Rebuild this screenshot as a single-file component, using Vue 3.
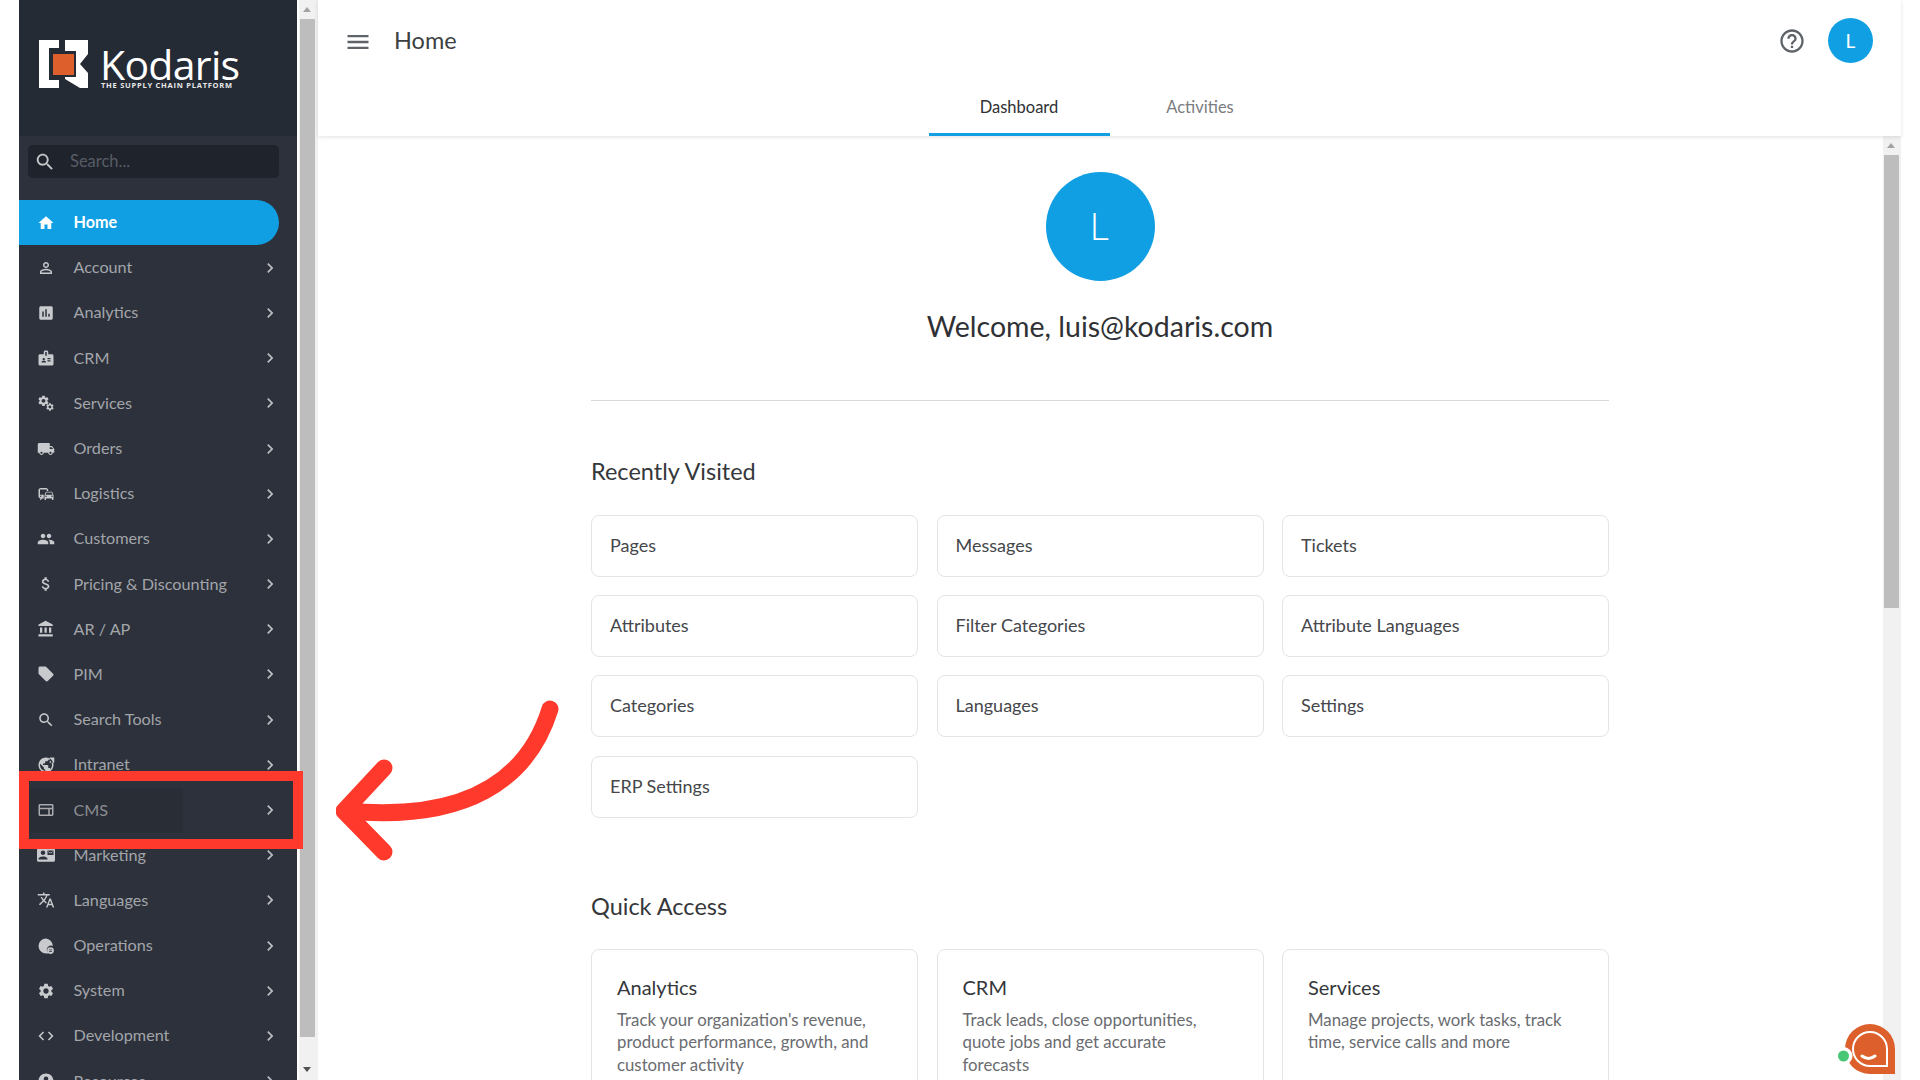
<script setup>
const gear = 'M19.14 12.94c.04-.3.06-.61.06-.94 0-.32-.02-.64-.07-.94l2.03-1.58c.18-.14.23-.41.12-.61l-1.92-3.32c-.12-.22-.37-.29-.59-.22l-2.39.96c-.5-.38-1.03-.7-1.62-.94l-.36-2.54c-.04-.24-.24-.41-.48-.41h-3.84c-.24 0-.43.17-.47.41l-.36 2.54c-.59.24-1.13.57-1.62.94l-2.39-.96c-.22-.08-.47 0-.59.22L2.74 8.87c-.12.21-.08.47.12.61l2.03 1.58c-.05.3-.09.63-.09.94s.02.64.07.94l-2.03 1.58c-.18.14-.23.41-.12.61l1.92 3.32c.12.22.37.29.59.22l2.39-.96c.5.38 1.03.7 1.62.94l.36 2.54c.05.24.24.41.48.41h3.84c.24 0 .44-.17.47-.41l.36-2.54c.59-.24 1.13-.56 1.62-.94l2.39.96c.22.08.47 0 .59-.22l1.92-3.32c.12-.22.07-.47-.12-.61l-2.01-1.58zM12 15.6c-1.98 0-3.6-1.62-3.6-3.6s1.62-3.6 3.6-3.6 3.6 1.62 3.6 3.6-1.62 3.6-3.6 3.6z'
const searchPath = 'M15.5 14h-.79l-.28-.27C15.41 12.59 16 11.11 16 9.5 16 5.91 13.09 3 9.5 3S3 5.91 3 9.5 5.91 16 9.5 16c1.61 0 3.09-.59 4.23-1.57l.27.28v.79l5 4.99L20.49 19l-4.99-5zm-6 0C7.01 14 5 11.99 5 9.5S7.01 5 9.5 5 14 7.01 14 9.5 11.99 14 9.5 14z'

const menu = [
  { label: 'Home', active: true, d: 'M10 20v-6h4v6h5v-8h3L12 3 2 12h3v8z' },
  { label: 'Account', d: 'M12 5.9a2.1 2.1 0 1 1 0 4.2 2.1 2.1 0 0 1 0-4.2m0 9c2.97 0 6.1 1.46 6.1 2.1v1.1H5.9V17c0-.64 3.13-2.1 6.1-2.1M12 4C9.79 4 8 5.79 8 8s1.79 4 4 4 4-1.79 4-4-1.79-4-4-4zm0 9c-2.67 0-8 1.34-8 4v3h16v-3c0-2.66-5.33-4-8-4z' },
  { label: 'Analytics', d: 'M19 3H5c-1.1 0-2 .9-2 2v14c0 1.1.9 2 2 2h14c1.1 0 2-.9 2-2V5c0-1.1-.9-2-2-2zM9 17H7v-7h2v7zm4 0h-2V7h2v10zm4 0h-2v-4h2v4z' },
  { label: 'CRM', d: 'M20 7h-5V4c0-1.1-.9-2-2-2h-2c-1.1 0-2 .9-2 2v3H4c-1.1 0-2 .9-2 2v11c0 1.1.9 2 2 2h16c1.1 0 2-.9 2-2V9c0-1.1-.9-2-2-2zM9 12c.83 0 1.5.67 1.5 1.5S9.83 15 9 15s-1.5-.67-1.5-1.5S8.17 12 9 12zm3 6H6v-.75c0-1 2-1.5 3-1.5s3 .5 3 1.5V18zm1-9h-2V4h2v5zm5 7.5h-4V15h4v1.5zm0-3h-4V12h4v1.5z' },
  { label: 'Services', gears: true },
  { label: 'Orders', d: 'M20 8h-3V4H3c-1.1 0-2 .9-2 2v11h2c0 1.66 1.34 3 3 3s3-1.34 3-3h6c0 1.66 1.34 3 3 3s3-1.34 3-3h2v-5l-3-4zM6 18.5c-.83 0-1.5-.67-1.5-1.5s.67-1.5 1.5-1.5 1.5.67 1.5 1.5-.67 1.5-1.5 1.5zm13.5-9l1.96 2.5H17V9.5h2.5zm-1.5 9c-.83 0-1.5-.67-1.5-1.5s.67-1.5 1.5-1.5 1.5.67 1.5 1.5-.67 1.5-1.5 1.5z' },
  { label: 'Logistics', d: 'M12 4H5C3.34 4 2 5.34 2 7v8c0 1.66 1.34 3 3 3l-1 1v1h1l2-2.03L9 18v-5H4V5.98L13 6v2h2V7c0-1.66-1.34-3-3-3zM5 14c.55 0 1 .45 1 1s-.45 1-1 1-1-.45-1-1 .45-1 1-1zm15.57-4.34c-.14-.4-.52-.66-.97-.66h-7.19c-.46 0-.83.26-.98.66L10 13.77l.01 5.51c0 .38.31.72.69.72h.62c.38 0 .68-.38.68-.76V18h8v1.24c0 .38.31.76.69.76h.61c.38 0 .69-.34.69-.72l.01-1.37v-4.14l-1.43-4.11zm-8.16.34h7.19l1.03 3h-9.25l1.03-3zM12 16c-.55 0-1-.45-1-1s.45-1 1-1 1 .45 1 1-.45 1-1 1zm8 0c-.55 0-1-.45-1-1s.45-1 1-1 1 .45 1 1-.45 1-1 1z' },
  { label: 'Customers', d: 'M16 11c1.66 0 2.99-1.34 2.99-3S17.66 5 16 5c-1.66 0-3 1.34-3 3s1.34 3 3 3zm-8 0c1.66 0 2.99-1.34 2.99-3S9.66 5 8 5C6.34 5 5 6.34 5 8s1.34 3 3 3zm0 2c-2.33 0-7 1.17-7 3.5V19h14v-2.5c0-2.33-4.67-3.5-7-3.5zm8 0c-.29 0-.62.02-.97.05 1.16.84 1.97 1.97 1.97 3.45V19h6v-2.5c0-2.33-4.67-3.5-7-3.5z' },
  { label: 'Pricing & Discounting', d: 'M11.8 10.9c-2.27-.59-3-1.2-3-2.15 0-1.09 1.01-1.85 2.7-1.85 1.78 0 2.44.85 2.5 2.1h2.21c-.07-1.72-1.12-3.3-3.21-3.81V3h-3v2.16c-1.94.42-3.5 1.68-3.5 3.61 0 2.31 1.91 3.46 4.7 4.13 2.5.6 3 1.48 3 2.41 0 .69-.49 1.79-2.7 1.79-2.06 0-2.87-.92-2.98-2.1h-2.2c.12 2.19 1.76 3.42 3.68 3.83V21h3v-2.15c1.95-.37 3.5-1.5 3.5-3.55 0-2.84-2.43-3.81-4.7-4.4z' },
  { label: 'AR / AP', d: 'M4 10v7h3v-7H4zm6 0v7h3v-7h-3zM2 22h19v-3H2v3zm14-12v7h3v-7h-3zm-4.5-9L2 6v2h19V6l-9.5-5z' },
  { label: 'PIM', d: 'M21.41 11.58l-9-9C12.05 2.22 11.55 2 11 2H4c-1.1 0-2 .9-2 2v7c0 .55.22 1.05.59 1.42l9 9c.36.36.86.58 1.41.58.55 0 1.05-.22 1.41-.59l7-7c.37-.36.59-.86.59-1.41 0-.55-.23-1.06-.59-1.42z' },
  { label: 'Search Tools', d: searchPath },
  { label: 'Intranet', d: 'M12 2C6.48 2 2 6.48 2 12s4.48 10 10 10 10-4.48 10-10S17.52 2 12 2zm-1 17.93c-3.95-.49-7-3.85-7-7.93 0-.62.08-1.21.21-1.79L9 15v1c0 1.1.9 2 2 2v1.93zm6.9-2.54c-.26-.81-1-1.39-1.9-1.39h-1v-3c0-.55-.45-1-1-1H8v-2h2c.55 0 1-.45 1-1V7h2c1.1 0 2-.9 2-2v-.41c2.93 1.19 5 4.06 5 7.41 0 2.08-.8 3.97-2.1 5.39zM17 2h6v7h-6z' },
  { label: 'CMS', d: 'M20 4H4c-1.1 0-2 .9-2 2v12c0 1.1.9 2 2 2h16c1.1 0 2-.9 2-2V6c0-1.1-.9-2-2-2zM4 18v-7h11v7H4zm16 0h-3v-7h3v7zm0-9H4V6h16v3z' },
  { label: 'Marketing', d: 'M21 8V7l-3 2-3-2v1l3 2 3-2zm1-5H2C.9 3 0 3.9 0 5v14c0 1.1.9 2 2 2h20c1.1 0 1.99-.9 1.99-2L24 5c0-1.1-.9-2-2-2zM8 6c1.66 0 3 1.34 3 3s-1.34 3-3 3-3-1.34-3-3 1.34-3 3-3zm6 12H2v-1c0-2 4-3.1 6-3.1s6 1.1 6 3.1v1zm8-6h-8V6h8v6z' },
  { label: 'Languages', d: 'M12.87 15.07l-2.54-2.51.03-.03c1.74-1.94 2.98-4.17 3.71-6.53H17V4h-7V2H8v2H1v1.99h11.17C11.5 7.92 10.44 9.75 9 11.35 8.07 10.32 7.3 9.19 6.69 8h-2c.73 1.63 1.73 3.17 2.98 4.56l-5.09 5.02L4 19l5-5 3.11 3.11.76-2.04zM18.5 10h-2L12 22h2l1.12-3h4.75L21 22h2l-4.5-12zm-2.62 7l1.62-4.33L19.12 17h-3.24z' },
  { label: 'Operations', d: 'M12 2a10 10 0 0 0 0 20c1 0 2-.2 3-.5A5.5 5.5 0 0 1 13 17a5.5 5.5 0 0 1 8-4.9c.1-.4 0-.7 0-1.1A10 10 0 0 0 12 2zm6 11.5a4.5 4.5 0 1 0 0 9 4.5 4.5 0 0 0 0-9zm-2 3h4v1h-4zm0 2h4v1h-4z' },
  { label: 'System', d: gear },
  { label: 'Development', d: 'M9.4 16.6L4.8 12l4.6-4.6L8 6l-6 6 6 6 1.4-1.4zm5.2 0l4.6-4.6-4.6-4.6L16 6l6 6-6 6-1.4-1.4z' },
  { label: 'Resources', d: 'M12 2C6.48 2 2 6.48 2 12s4.48 10 10 10 10-4.48 10-10S17.52 2 12 2zm0 4a3 3 0 1 1 0 6 3 3 0 0 1 0-6z' }
]

const recent = ['Pages', 'Messages', 'Tickets', 'Attributes', 'Filter Categories', 'Attribute Languages', 'Categories', 'Languages', 'Settings', 'ERP Settings']

const quick = [
  { title: 'Analytics', text: "Track your organization's revenue, product performance, growth, and customer activity" },
  { title: 'CRM', text: 'Track leads, close opportunities, quote jobs and get accurate forecasts' },
  { title: 'Services', text: 'Manage projects, work tasks, track time, service calls and more' }
]
</script>

<template>
  <div class="page">
    <aside class="sidebar">
      <div class="brand">
        <svg class="brand-mark" viewBox="0 0 49 48" width="49" height="48">
          <path fill="#fff" d="M0 0h20v8h-10v32h10v8H0z" />
          <rect x="14" y="14" width="21" height="21" fill="#dd602c" />
          <path fill="#fff" d="M26 0h23v14l-8 10 8 9v15H41L26 39v-2h11V11H26z" />
        </svg>
        <div class="brand-text">
          <div class="brand-name">Kodaris</div>
          <div class="brand-tag">THE SUPPLY CHAIN PLATFORM</div>
        </div>
      </div>
      <div class="search">
        <svg viewBox="0 0 24 24" width="22" height="22"><path fill="#c3c5c8" :d="searchPath" /></svg>
        <span>Search...</span>
      </div>
      <nav class="nav">
        <div v-for="item in menu" :key="item.label" class="nav-item" :class="{ active: item.active }">
          <svg v-if="item.gears" class="nav-icon" viewBox="0 0 24 24" width="18" height="18">
            <path fill="currentColor" :d="gear" transform="translate(0 .5) scale(.72)" />
            <path fill="currentColor" :d="gear" transform="translate(11 11) scale(.52)" />
          </svg>
          <svg v-else class="nav-icon" viewBox="0 0 24 24" width="18" height="18">
            <path fill="currentColor" :d="item.d" />
          </svg>
          <span class="nav-label">{{ item.label }}</span>
          <svg v-if="!item.active" class="nav-chev" viewBox="0 0 24 24" width="20" height="20">
            <path fill="currentColor" d="M10 6L8.59 7.41 13.17 12l-4.58 4.59L10 18l6-6z" />
          </svg>
        </div>
      </nav>
    </aside>

    <div class="side-scroll">
      <i class="arrow-up"></i>
      <div class="side-thumb"></div>
      <i class="arrow-down"></i>
    </div>

    <main class="main">
      <header class="topbar">
        <div class="topline">
          <svg class="burger" viewBox="0 0 24 24" width="28" height="28">
            <path fill="#5f6368" d="M3 18h18v-2H3v2zm0-5h18v-2H3v2zm0-7v2h18V6H3z" />
          </svg>
          <h1>Home</h1>
          <svg class="help" viewBox="0 0 24 24" width="28" height="28">
            <path fill="#5f6368" d="M11 18h2v-2h-2v2zm1-16C6.48 2 2 6.48 2 12s4.48 10 10 10 10-4.48 10-10S17.52 2 12 2zm0 18c-4.41 0-8-3.59-8-8s3.59-8 8-8 8 3.59 8 8-3.59 8-8 8zm0-14c-2.21 0-4 1.79-4 4h2c0-1.1.9-2 2-2s2 .9 2 2c0 2-3 1.75-3 5h2c0-2.25 3-2.5 3-5 0-2.21-1.79-4-4-4z" />
          </svg>
          <div class="avatar-small">L</div>
        </div>
        <div class="tabs">
          <div class="tab on">Dashboard</div>
          <div class="tab">Activities</div>
        </div>
      </header>

      <div class="body">
        <div class="content">
          <div class="avatar-big">L</div>
          <div class="welcome">Welcome, luis@kodaris.com</div>
          <hr />
          <h2 class="first">Recently Visited</h2>
          <div class="grid">
            <div v-for="name in recent" :key="name" class="link-card">{{ name }}</div>
          </div>
          <h2 class="second">Quick Access</h2>
          <div class="grid quick-grid">
            <div v-for="q in quick" :key="q.title" class="quick-card">
              <h3>{{ q.title }}</h3>
              <p>{{ q.text }}</p>
            </div>
          </div>
        </div>
        <div class="body-scroll">
          <i class="arrow-up"></i>
          <div class="body-thumb"></div>
        </div>
      </div>
    </main>

    <!-- tutorial callout drawn over the screenshot -->
    <div class="callout"><div class="callout-shade"></div></div>
    <svg class="arrow" viewBox="0 0 260 190" width="260" height="190">
      <g fill="none" stroke="#ff3a2c" stroke-width="17" stroke-linecap="round" stroke-linejoin="round">
        <path d="M214 9C192 80 130 122 10 111" />
        <path d="M48 68L8 111 48 152" />
      </g>
    </svg>

    <svg class="chat" viewBox="0 0 60 60" width="60" height="60">
      <path fill="#dd602c" d="M9 30a25 25 0 1 1 50 0v25H34A25 25 0 0 1 9 30z" />
      <circle cx="7.500" cy="37" r="9" fill="#fff" />
      <path fill="none" stroke="#fff" stroke-width="2" d="M17 30a17 17 0 1 1 34 0v17H34a17 17 0 0 1-17-17z" />
      <path fill="none" stroke="#fff" stroke-width="3" stroke-linecap="round" d="M26 37c4 3 9 3 13 0" />
      <circle cx="7.500" cy="37" r="5.500" fill="#48c774" />
    </svg>
  </div>
</template>

<style scoped>
.page {
  position: relative;
  display: flex;
  height: 1080px;
  padding: 0 19px;
  box-sizing: border-box;
  overflow: hidden;
  font-family: Lato, "Open Sans", sans-serif;
  background: #fff;
}

.sidebar {
  width: 278px;
  flex: none;
  background: #2c313b;
  overflow: hidden;
}

.brand {
  height: 136px;
  background: #252b35;
  display: flex;
  padding: 40px 0 0 20px;
  box-sizing: border-box;
  gap: 12px;
}

.brand-mark {
  flex: none;
}

.brand-name {
  margin-top: 8px;
  font-family: "Open Sans", sans-serif;
  font-size: 41px;
  font-weight: 500;
  line-height: 32px;
  color: #fff;
  letter-spacing: -0.700px;
}

.brand-tag {
  margin: 1px 0 0 1px;
  font-family: "Open Sans", sans-serif;
  font-size: 7.500px;
  font-weight: 700;
  line-height: 8px;
  letter-spacing: 0.750px;
  color: #e8e8e8;
}

.search {
  height: 33px;
  margin: 9px 18px 0 9px;
  padding-left: 6px;
  background: #1f232b;
  border-radius: 5px;
  display: flex;
  align-items: center;
  gap: 14px;
  color: #575c66;
  font-size: 16.500px;
}

.search span {
  padding-bottom: 2px;
}

.nav {
  margin-top: 22px;
}

.nav-item {
  height: 45.200px;
  display: flex;
  align-items: center;
  margin-right: 18px;
  padding-left: 18px;
  color: #a3a5aa;
  font-size: 16.200px;
}

.nav-item.active {
  color: #fff;
  font-weight: 700;
  background: #109fe2;
  border-radius: 0 23px 23px 0;
}

.nav-icon {
  flex: none;
  color: #c8cacd;
  margin-right: 18.500px;
}

.active .nav-icon {
  color: #fff;
}

.nav-label {
  flex: 1;
  padding-bottom: 2px;
}

.nav-chev {
  flex: none;
  margin-right: -1px;
  color: #bcbec1;
}

.side-scroll {
  position: relative;
  width: 21px;
  flex: none;
  background: #f1f1f1;
  border-left: 2px solid #fff;
  box-sizing: border-box;
}

.side-thumb {
  position: absolute;
  left: 1px;
  top: 19px;
  width: 15px;
  height: 1018px;
  background: #bdbdbd;
}

.arrow-up,
.arrow-down {
  position: absolute;
  left: 4px;
  width: 0;
  height: 0;
  border-left: 4px solid transparent;
  border-right: 4px solid transparent;
}

.arrow-up {
  top: 7px;
  border-bottom: 5px solid #a3a3a3;
}

.arrow-down {
  bottom: 8px;
  border-top: 5px solid #505050;
}

.main {
  flex: 1;
  min-width: 0;
  display: flex;
  flex-direction: column;
}

.topbar {
  height: 136px;
  flex: none;
  position: relative;
  z-index: 1;
  box-shadow: 0 1px 4px rgba(0, 0, 0, 0.12);
  background: #fff;
}

.topline {
  height: 80px;
  margin-bottom: 2px;
  display: flex;
  align-items: center;
  padding-left: 26px;
}

.burger {
  flex: none;
  margin-top: 4px;
}

h1 {
  flex: 1;
  margin: 0 0 0 22px;
  font-size: 23.500px;
  font-weight: 400;
  color: #3d3f43;
}

.help {
  flex: none;
  margin: 2px 22px 0 0;
}

.avatar-small {
  width: 45px;
  height: 45px;
  margin-right: 28px;
  border-radius: 50%;
  background: #109fe2;
  color: #fff;
  display: flex;
  align-items: center;
  justify-content: center;
  font-size: 19px;
}

.tabs {
  display: flex;
  justify-content: center;
}

.tab {
  width: 181px;
  height: 54px;
  box-sizing: border-box;
  padding-top: 15px;
  line-height: 20px;
  text-align: center;
  font-size: 16.500px;
  color: #7a7c80;
  border-bottom: 3px solid transparent;
}

.tab.on {
  color: #2f3135;
  border-bottom-color: #109fe2;
}

.body {
  flex: 1;
  min-height: 0;
  display: flex;
}

.content {
  flex: 1;
  min-width: 0;
  padding: 36px 274px 0 273px;
  box-sizing: border-box;
}

.avatar-big {
  width: 109px;
  height: 109px;
  margin: 0 auto;
  padding: 0 2px 4px 0;
  box-sizing: border-box;
  border-radius: 50%;
  background: #109fe2;
  color: #fff;
  display: flex;
  align-items: center;
  justify-content: center;
  font-size: 38px;
  font-weight: 300;
}

.welcome {
  margin-top: 27px;
  text-align: center;
  font-size: 28.500px;
  line-height: 36px;
  color: #2f3135;
}

hr {
  height: 1px;
  margin: 56px 0 0;
  border: 0;
  background: #d9d9d9;
}

h2 {
  margin: 0;
  font-size: 23.500px;
  font-weight: 400;
  line-height: 30px;
  color: #35373b;
}

h2.first {
  margin-top: 55px;
}

h2.second {
  margin-top: 73px;
}

.grid {
  display: grid;
  grid-template-columns: repeat(3, 1fr);
  gap: 18.200px 18.500px;
  margin-top: 29px;
}

.quick-grid {
  margin-top: 28px;
}

.link-card {
  height: 62px;
  padding: 0 0 2px 18px;
  box-sizing: border-box;
  display: flex;
  align-items: center;
  border: 1.500px solid #e4e4e4;
  border-radius: 8px;
  font-size: 18px;
  color: #45474b;
}

.quick-card {
  height: 240px;
  padding: 22px 37px 24px 25px;
  box-sizing: border-box;
  border: 1.500px solid #e4e4e4;
  border-radius: 8px;
}

h3 {
  margin: 0;
  font-size: 20px;
  font-weight: 400;
  line-height: 30px;
  color: #35373b;
}

.quick-card p {
  margin: 7px 0 0;
  font-size: 16.800px;
  line-height: 22.500px;
  color: #6a6c70;
}

.body-scroll {
  position: relative;
  width: 18px;
  flex: none;
  background: #f1f1f1;
}

.body-thumb {
  position: absolute;
  left: 1px;
  top: 19px;
  width: 15px;
  height: 453px;
  background: #bdbdbd;
}

.callout {
  position: absolute;
  left: 19px;
  top: 771px;
  width: 284px;
  height: 78px;
  box-sizing: border-box;
  border: 10px solid #ff3a2c;
  padding-top: 7px;
}

.callout-shade {
  width: 154px;
  height: 45px;
  background: rgba(30, 30, 35, 0.18);
}

.arrow {
  position: absolute;
  left: 336px;
  top: 700px;
}

.chat {
  position: absolute;
  left: 1836px;
  top: 1019px;
}
</style>

<style>
html,
body {
  margin: 0;
  overflow: hidden;
  background: #fff;
}
</style>
